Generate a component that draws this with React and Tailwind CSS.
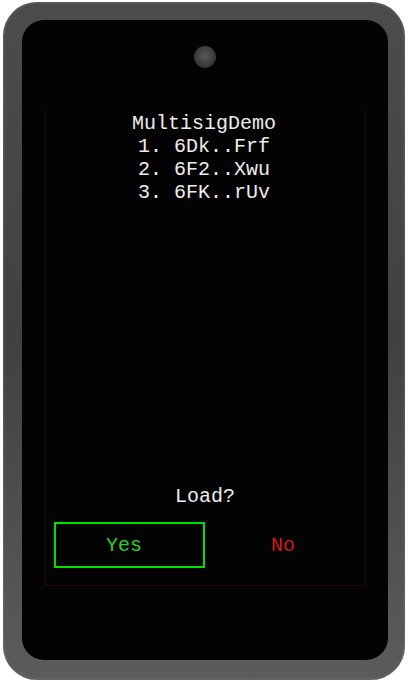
export default function App() {
  const lines = ["MultisigDemo", "1. 6Dk..Frf", "2. 6F2..Xwu", "3. 6FK..rUv"];

  return (
    <div className="w-[408px] h-[683px] bg-white pl-[3px] pt-[2px]">
      {/* device frame */}
      <div className="w-[402px] h-[678px] rounded-[34px] bg-gradient-to-b from-[#4a4d4c] via-[#3f4241] to-[#5a5d5c] pt-[18px] pl-[19px] pr-[17px] pb-[20px] shadow-[inset_0_0_3px_#777]">
        <div className="h-full rounded-[22px] bg-[#030303] flex flex-col items-center">
          {/* camera */}
          <div className="mt-[26px] w-[22px] h-[22px] rounded-full bg-[radial-gradient(circle_at_50%_45%,#5a5a5a,#3a3a3a_60%,#1a1a1a)]" />

          {/* screen */}
          <div
            className="mt-[42px] w-[321px] h-[476px] border-l border-r border-b border-[#240707] flex flex-col text-[#ececec] text-[20px] leading-[23px]"
            style={{ fontFamily: '"Liberation Mono", "DejaVu Sans Mono", monospace' }}
          >
            <div className="pt-[2px] pr-[2px] flex flex-col items-center">
              {lines.map((l) => (
                <div key={l} className="whitespace-pre">
                  {l}
                </div>
              ))}
            </div>

            <div className="flex-1" />

            <div className="text-center mb-[14px]">Load?</div>

            <div className="flex items-center pl-[8px] pr-[3px] mb-[17px]">
              <div className="w-[151px] h-[46px] border-2 border-[#00e000] flex items-center justify-center pr-[10px] text-[#2bd12b]">
                Yes
              </div>
              <div className="flex-1 text-center text-[#d01818]">No</div>
            </div>
          </div>
        </div>
      </div>
    </div>
  );
}
